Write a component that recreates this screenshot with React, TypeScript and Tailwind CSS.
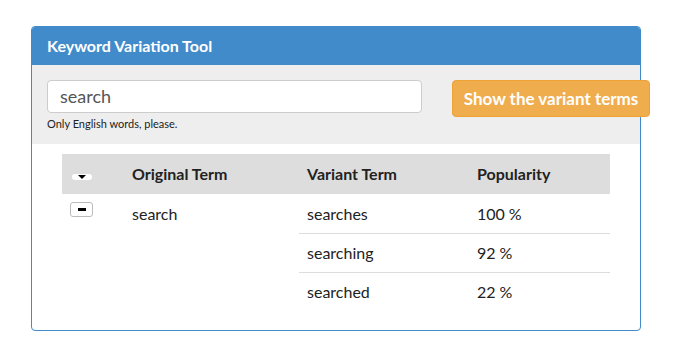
import React from 'react';

const rows = [
  { term: 'searches', pop: '100\u202F%' },
  { term: 'searching', pop: '92\u202F%' },
  { term: 'searched', pop: '22\u202F%' },
];

export default function App() {
  return (
    <div className="w-[676px] h-[353px] bg-white pt-[26px] pl-[31px] font-['Lato',sans-serif] text-[#333]">
      <div className="w-[610px] h-[305px] border border-[#428bca] rounded-[4px] flex flex-col">
        {/* Header */}
        <div className="h-[38px] bg-[#428bca] flex items-center pl-[15px] rounded-t-[3px]">
          <span className="text-white font-bold text-[16px]">Keyword Variation Tool</span>
        </div>

        {/* Search form */}
        <div className="h-[79px] bg-[#eeeeee] flex pl-[15px] pt-[15px]">
          <div className="w-[375px] shrink-0">
            <div className="h-[33px] bg-white border border-[#cccccc] rounded-[4px] flex items-center pl-[12px] text-[18px] text-[#555]">
              search
            </div>
            <p className="text-[11px] text-[#222] mt-[5px] leading-none">Only English words, please.</p>
          </div>
          <button className="ml-[30px] shrink-0 w-[198px] h-[37px] bg-[#f0ad4e] border border-[#eea236] rounded-[4px] text-white font-bold text-[17px]">
            Show the variant terms
          </button>
        </div>

        {/* Results table */}
        <div className="pl-[30px] pr-[30px] pt-[10px]">
          <div className="grid grid-cols-[62px_175px_170px_141px] h-[40px] bg-[#dddddd] items-center font-bold text-[16px] text-[#222]">
            <div className="flex pl-[10px] pt-[6px]">
              <span className="w-[20px] h-[6px] bg-white rounded-full flex items-center justify-center">
                <span className="w-0 h-0 border-l-[4px] border-r-[4px] border-t-[4px] border-l-transparent border-r-transparent border-t-black" />
              </span>
            </div>
            <div className="pl-[8px]">Original Term</div>
            <div className="pl-[8px]">Variant Term</div>
            <div className="pl-[8px]">Popularity</div>
          </div>
          <div className="grid grid-cols-[62px_175px_311px] text-[16px] text-[#222]">
            <div className="flex pl-[8px] pt-[8px]">
              <span className="w-[23px] h-[15px] bg-white border border-[#bbbbbb] rounded-[3px] flex items-center justify-center">
                <span className="w-[8px] h-[3px] bg-black" />
              </span>
            </div>
            <div className="pl-[8px] h-[39px] flex items-center">search</div>
            <div className="flex flex-col">
              {rows.map((r, i) => (
                <div
                  key={r.term}
                  className={`grid grid-cols-[170px_141px] h-[39px] items-center ${i > 0 ? 'border-t border-[#dddddd]' : ''}`}
                >
                  <div className="pl-[8px]">{r.term}</div>
                  <div className="pl-[8px]">{r.pop}</div>
                </div>
              ))}
            </div>
          </div>
        </div>
      </div>
    </div>
  );
}
